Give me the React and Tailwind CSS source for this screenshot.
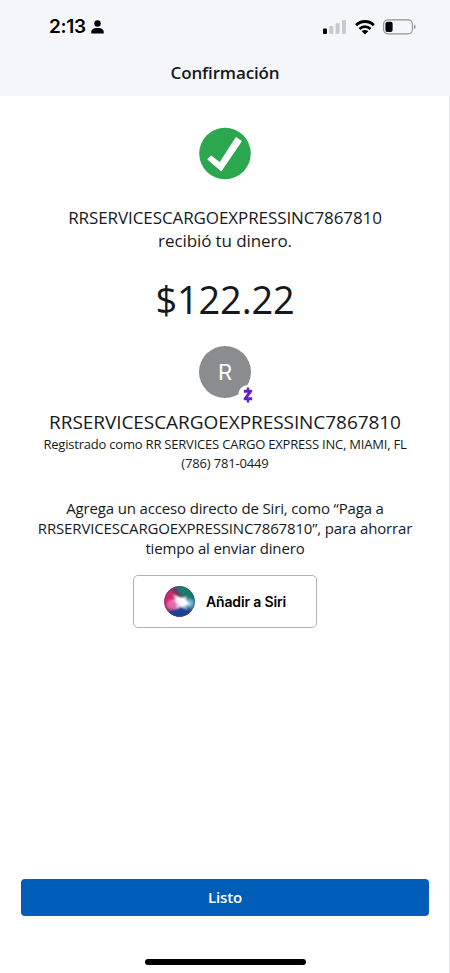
const SignalIcon = () => (
  <svg className="w-6 h-4" viewBox="0 0 24 16">
    <rect x="0" y="9.5" width="4" height="5.5" rx="1" fill="#000" />
    <rect x="6.3" y="7" width="4" height="8" rx="1" fill="#c9cacc" />
    <rect x="12.6" y="4" width="4" height="11" rx="1" fill="#c9cacc" />
    <rect x="19" y="1" width="4" height="14" rx="1" fill="#c9cacc" />
  </svg>
);

const WifiIcon = () => (
  <svg className="w-5 h-[15px]" viewBox="0 0 20 15">
    <path d="M1.2 5.2a12.6 12.6 0 0 1 17.6 0" fill="none" stroke="#000" strokeWidth="3" />
    <path d="M4.5 8.9a8 8 0 0 1 11 0" fill="none" stroke="#000" strokeWidth="2.7" />
    <path d="M10 14.5 6.7 11.3a4.7 4.7 0 0 1 6.6 0z" fill="#000" />
  </svg>
);

const BatteryIcon = () => (
  <svg className="w-[34px] h-4" viewBox="0 0 34 16">
    <rect x="0.6" y="0.9" width="28.8" height="14" rx="4.3" fill="none" stroke="#8f9093" strokeWidth="1.1" />
    <rect x="2.4" y="2.7" width="7.2" height="10.4" rx="2" fill="#000" />
    <path d="M31 5.6c2 .7 2 4 0 4.7z" fill="#8f9093" />
  </svg>
);

const SiriIcon = () => (
  <svg className="w-8 h-8" viewBox="0 0 32 32">
    <defs>
      <clipPath id="orb">
        <circle cx="15.5" cy="15.5" r="15.2" />
      </clipPath>
      <filter id="soft" x="-50%" y="-50%" width="200%" height="200%">
        <feGaussianBlur stdDeviation="1.3" />
      </filter>
      <filter id="edge" x="-50%" y="-50%" width="200%" height="200%">
        <feGaussianBlur stdDeviation="0.9" />
      </filter>
    </defs>
    <g clipPath="url(#orb)">
      <rect width="32" height="32" fill="#34507f" />
      <g filter="url(#soft)">
        <path d="M9-2h25v17l-8-2-9-4z" fill="#187d68" />
        <path d="M-2 5 9 0l5 10-5 14-11 2z" fill="#cc2b6c" />
        <path d="M6 3l6-3 6 10-3 3z" fill="#5b4263" />
        <path d="M34 13v13l-8-3-7-8z" fill="#3484a8" />
        <path d="M3 25l9-4 7 1 9 2-4 9H8z" fill="#1c4290" />
        <ellipse cx="9" cy="18.500" rx="6" ry="5" fill="#e56aa9" />
        <ellipse cx="24.5" cy="17" rx="5" ry="4" fill="#73b8d3" />
      </g>
      <path d="M8 8l9 4 6-2-1 5 5 3-6 1 3 5-7-3-5 2 1-5-4-4 4-1z" fill="#fff" opacity="0.75" filter="url(#soft)" />
      <path d="M10 10l7 2 4 0 1 3 3 3-4 1-3 2-4-4z" fill="#fff" filter="url(#edge)" />
    </g>
    <circle cx="15.5" cy="15.5" r="14.8" fill="none" stroke="#5c3d68" strokeOpacity="0.4" />
  </svg>
);

const StatusBar = () => (
  <div className="flex items-center justify-between h-[54px] pl-[49px] pr-[33px]">
    <div className="flex items-center gap-[5px]">
      <span className="font-['Inter'] text-[19px] font-semibold tracking-[-0.3px] text-black">2:13</span>
      <svg className="w-[13px] h-[14px]" viewBox="0 0 13 14">
        <circle cx="6.5" cy="3.5" r="3.2" />
        <path d="M0.3 13.5V12c0-2.5 2.2-4 6.2-4s6.2 1.5 6.2 4v1.5z" />
      </svg>
    </div>
    <div className="flex items-center gap-2">
      <SignalIcon />
      <WifiIcon />
      <BatteryIcon />
    </div>
  </div>
);

const Recipient = () => (
  <section className="flex flex-col items-center">
    <div className="relative size-[52px] rounded-full bg-[#8b8c8e] flex items-center justify-center">
      <span className="font-['Inter'] text-[22px] text-white">R</span>
      {/* Zelle badge */}
      <span className="absolute left-[39px] top-[39px] w-5 h-5 rounded-full bg-white flex items-center justify-center">
        <svg className="w-[10px] h-4" viewBox="0 0 10 16" fill="none" stroke="#6420c4" strokeLinejoin="round">
          <path d="M.8 4.2h7L2 11.8h7.2" strokeWidth="2.9" />
          <path d="M5 .5V4M5 12v3.5" strokeWidth="2.4" />
        </svg>
      </span>
    </div>
    <h2 className="mt-[11px] text-[19px] leading-[26px] tracking-[-0.06px]">RRSERVICESCARGOEXPRESSINC7867810</h2>
    <p className="text-[13px] leading-[18.5px] tracking-[-0.21px]">
      Registrado como RR SERVICES CARGO EXPRESS INC, MIAMI, FL
    </p>
    <p className="text-[13px] leading-[18.5px] tracking-[-0.16px]">(786) 781-0449</p>
  </section>
);

const App = () => {
  return (
    <div className="flex flex-col h-[973px] w-full bg-white shadow-[inset_-1px_0_0_#e3e4e6] font-['Open_Sans',sans-serif] text-[#15191d]">
      <header className="h-24 bg-[#f4f6f9]">
        <StatusBar />
        <h1 className="text-center text-[17px] leading-[38px] font-semibold tracking-[-0.15px]">Confirmación</h1>
      </header>

      <main className="flex flex-1 flex-col items-center text-center pt-[31px]">
        <svg className="w-[52px] h-[53px]" viewBox="0 0 53 53">
          <circle cx="26.5" cy="26.5" r="26.3" fill="#2ca74f" />
          <path
            d="M9.2 32.3 12.5 29.2 21.2 36.2 37.8 10.5 43 14 22.6 44z"
            fill="#fff"
            stroke="#fff"
            strokeWidth="1.2"
            strokeLinejoin="round"
          />
        </svg>
        <p className="mt-[26px] text-[17px] leading-[23px] tracking-[-0.09px]">
          RRSERVICESCARGOEXPRESSINC7867810
          <br />
          recibió tu dinero.
        </p>
        <p className="mt-[21px] mb-[21px] text-[38px] leading-[52px] tracking-[-0.2px]">$122.22</p>

        <Recipient />

        <p className="mt-[26px] text-[15px] leading-5 tracking-[-0.15px]">
          Agrega un acceso directo de Siri, como “Paga a
          <br />
          RRSERVICESCARGOEXPRESSINC7867810”, para ahorrar
          <br />
          tiempo al enviar dinero
        </p>

        <button className="mt-[17px] flex items-center justify-center gap-2.5 w-[184px] h-[53px] rounded-[5px] border border-[#b3b3b5]">
          <SiriIcon />
          <span className="font-['Inter'] text-[14px] font-semibold tracking-[-0.15px] text-black">Añadir a Siri</span>
        </button>
      </main>

      <footer className="flex flex-col items-center px-[21px] pb-2">
        <button className="w-full h-[37px] rounded bg-[#005eb8] text-white text-[15px] font-semibold tracking-[-0.15px]">
          Listo
        </button>
        <div className="mt-[43px] w-[161px] h-[6px] rounded-full bg-black" />
      </footer>
    </div>
  );
};

export default App;
